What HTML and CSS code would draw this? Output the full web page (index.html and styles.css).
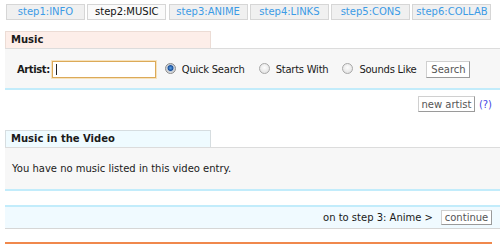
FILE: index.html
```html
<!DOCTYPE html>
<html>
<head>
<meta charset="utf-8">
<link rel="stylesheet" href="styles.css">
</head>
<body>
<div class="tabs">
  <a class="tab">step1:INFO</a>
  <a class="tab active">step2:MUSIC</a>
  <a class="tab">step3:ANIME</a>
  <a class="tab">step4:LINKS</a>
  <a class="tab">step5:CONS</a>
  <a class="tab">step6:COLLAB</a>
</div>

<div class="sec-head pink">Music</div>
<div class="panel search-panel">
  <label class="lbl">Artist:</label>
  <span class="input"><span class="caret"></span></span>
  <span class="radio on"></span><span class="opt">Quick Search</span>
  <span class="radio"></span><span class="opt">Starts With</span>
  <span class="radio"></span><span class="opt last">Sounds Like</span>
  <span class="btn search-btn">Search</span>
</div>

<div class="tools">
  <span class="btn new-btn">new artist</span>
  <a class="help">(?)</a>
</div>

<div class="sec-head blue">Music in the Video</div>
<div class="panel list-panel">You have no music listed in this video entry.</div>

<div class="next-bar">
  <span class="next-text">on to step 3: Anime &gt;</span>
  <span class="btn cont-btn">continue</span>
</div>

<div class="orange-line"></div>
</body>
</html>
```
FILE: styles.css
```css
html, body {
  margin: 0;
  background: #fff;
}
body {
  padding: 4px 0 0 5px;
  font-family: "DejaVu Sans", Verdana, sans-serif;
  font-size: 10px;
  color: #1a1a1a;
  overflow: hidden;
}
.tabs {
  display: flex;
  gap: 2.3px;
  height: 16px;
  padding-left: 1px;
}
.tab {
  box-sizing: border-box;
  width: 79px;
  height: 16px;
  border: 1px solid #d6d6d6;
  background: #f0f0f0;
  color: #3c9be6;
  text-align: center;
  line-height: 14px;
}
.tab.active {
  background: #fafafa;
  color: #111;
}
.sec-head {
  box-sizing: border-box;
  width: 206px;
  height: 17px;
  margin-top: 11px;
  padding-left: 5px;
  font-weight: bold;
  line-height: 16px;
  border: 1px solid #e2d6d0;
  border-bottom: none;
}
.sec-head.pink {
  background: #fdeee9;
  border-color: #ecdcd5;
}
.sec-head.blue {
  margin-top: 18px;
  background: #effbff;
  border-color: #d6dde0;
}
.panel {
  background: #f7f7f7;
  border-top: 1px solid #dcdcdc;
  border-bottom: 2px solid #c2ecfb;
}
.search-panel {
  box-sizing: border-box;
  height: 42px;
  display: flex;
  align-items: center;
  padding-left: 12px;
  padding-top: 2px;
}
.lbl {
  font-weight: bold;
  letter-spacing: -0.4px;
  margin-right: 2px;
}
.input {
  box-sizing: border-box;
  width: 104px;
  height: 17px;
  background: #fff;
  border: 1px solid #dcaa58;
  box-shadow: 0 0 0 1px #f6e2bd;
  display: flex;
  align-items: center;
  padding-left: 3px;
  margin-right: 9px;
}
.caret {
  width: 1px;
  height: 11px;
  background: #222;
}
.radio {
  box-sizing: border-box;
  width: 11px;
  height: 11px;
  border-radius: 50%;
  border: 1px solid #a8a8a8;
  background: radial-gradient(circle at 50% 40%, #fdfdfd 0, #e6e6e6 70%, #d0d0d0 100%);
  margin-right: 6px;
  margin-top: -3px;
}
.radio.on {
  background: radial-gradient(circle at 50% 45%, #5aa6ea 0, #1a4f9c 2.5px, #b8c6d6 3.3px, #dcdcdc 4.5px);
  border-color: #8a8a8a;
}
.opt {
  letter-spacing: -0.25px;
  margin-right: 14px;
}
.opt.last {
  margin-right: 10px;
}
.btn {
  box-sizing: border-box;
  display: inline-flex;
  align-items: center;
  justify-content: center;
  background: #fff;
  color: #555;
  border: 1px solid #d0d0d0;
  border-right-color: #9a9a9a;
  border-bottom-color: #9a9a9a;
}
.search-btn {
  width: 44px;
  height: 17px;
}
.tools {
  display: flex;
  justify-content: flex-end;
  align-items: center;
  padding-right: 8px;
  margin-top: 6px;
  height: 16px;
}
.new-btn {
  width: 57px;
  height: 16px;
}
.help {
  color: #4646e6;
  margin-left: 4px;
}
.list-panel {
  box-sizing: border-box;
  height: 44px;
  padding: 15px 0 0 7px;
}
.next-bar {
  box-sizing: border-box;
  height: 24px;
  margin-top: 14px;
  background: #f0faff;
  border-top: 2px solid #c2ecfb;
  border-bottom: 1px solid #d6d6d6;
  display: flex;
  justify-content: flex-end;
  align-items: center;
  padding-right: 8px;
}
.next-text {
  color: #1a1a1a;
  margin-right: 8px;
}
.cont-btn {
  width: 51px;
  height: 15px;
}
.orange-line {
  width: 487px;
  height: 2px;
  background: #f0884c;
  margin-top: 13px;
}
```
